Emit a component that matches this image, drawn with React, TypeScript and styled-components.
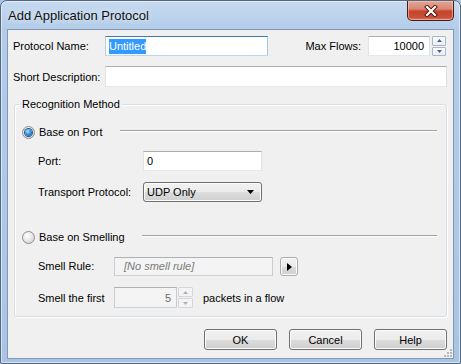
import React from "react";
import styled, { createGlobalStyle, css } from "styled-components";

const GlobalStyle = createGlobalStyle`
  html, body {
    margin: 0;
    padding: 0;
    background: #a9c4e2;
  }
  * {
    box-sizing: border-box;
  }
  body {
    font-family: "Liberation Sans", Arial, sans-serif;
    font-size: 11px;
    color: #000;
  }
`;

const Window = styled.div`
  position: relative;
  width: 461px;
  height: 364px;
  display: flex;
  flex-direction: column;
  padding: 0 6px 4px 6px;
  border: 1px solid #53677f;
  border-radius: 7px 7px 2px 2px;
  background: linear-gradient(
    to bottom,
    #c6daf0 0px,
    #bcd3ec 14px,
    #b3cce8 29px,
    #aec8e6 60%,
    #a9c4e2 100%
  );
  box-shadow: inset 0 0 0 1px rgba(255, 255, 255, 0.55);
`;

const TitleBar = styled.div`
  height: 28px;
  display: flex;
  align-items: flex-start;
  justify-content: space-between;
  padding-left: 1px;
`;

const Title = styled.div`
  font-size: 13px;
  line-height: 16px;
  margin-top: 7px;
  color: #101010;
  text-shadow: 0 0 6px rgba(255, 255, 255, 0.9);
`;

const CloseButton = styled.div`
  width: 47px;
  height: 20px;
  display: flex;
  align-items: center;
  justify-content: center;
  border: 1px solid #4a1b14;
  border-top: none;
  border-radius: 0 0 5px 5px;
  background: linear-gradient(
    to bottom,
    #e6a394 0%,
    #d98a78 40%,
    #c7442b 55%,
    #c94f36 85%,
    #d9765e 100%
  );
  box-shadow: inset 0 0 0 1px rgba(255, 210, 200, 0.55);
`;

const Client = styled.div`
  position: relative;
  flex: 1;
  display: flex;
  flex-direction: column;
  border: 1px solid #8197b3;
  background: #f0f0f0;
  padding: 6px 6px 0 5px;
`;

const Row = styled.div<{ $top?: number; $height?: number }>`
  display: flex;
  align-items: center;
  height: ${(p) => p.$height ?? 20}px;
  margin-top: ${(p) => p.$top ?? 0}px;
`;

const Label = styled.div<{ $width?: number }>`
  flex: none;
  width: ${(p) => (p.$width ? `${p.$width}px` : "auto")};
  white-space: nowrap;
`;

const Spacer = styled.div`
  flex: 1;
`;

const TextBox = styled.div<{
  $width?: number;
  $height?: number;
  $focused?: boolean;
  $disabled?: boolean;
  $right?: boolean;
}>`
  flex: ${(p) => (p.$width ? "none" : "1")};
  width: ${(p) => (p.$width ? `${p.$width}px` : "auto")};
  height: ${(p) => p.$height ?? 20}px;
  display: flex;
  align-items: center;
  justify-content: ${(p) => (p.$right ? "flex-end" : "flex-start")};
  padding: 0 5px 0 3px;
  background: #fff;
  border: 1px solid;
  border-color: #abadb3 #dbdfe6 #e3e9ef #e2e3ea;
  white-space: nowrap;
  ${(p) =>
    p.$focused &&
    css`
      border-color: #3d7bad #a4c9e3 #b7d9ed #b5cfe7;
    `}
  ${(p) =>
    p.$disabled &&
    css`
      background: #f4f4f4;
      border-color: #adb2b5 #c9cdd1 #d0d3d6 #c9cdd1;
      color: #6d6d6d;
    `}
`;

const Selected = styled.span`
  background: #3399ff;
  color: #fff;
  padding: 1px 0 2px;
`;

const Placeholder = styled.span`
  font-style: italic;
  color: #7a7a7a;
  padding-left: 6px;
`;

const SpinBox = styled.div<{ $width: number; $height: number; $gap?: number }>`
  flex: none;
  display: flex;
  flex-direction: column;
  gap: 1px;
  width: ${(p) => p.$width}px;
  height: ${(p) => p.$height}px;
  margin-left: ${(p) => p.$gap ?? 1}px;
`;

const SpinHalf = styled.div<{ $disabled?: boolean }>`
  flex: 1;
  display: flex;
  align-items: center;
  justify-content: center;
  border: 1px solid ${(p) => (p.$disabled ? "#d4d6d9" : "#a9b6c8")};
  border-radius: 1px;
  background: ${(p) =>
    p.$disabled
      ? "#f4f4f4"
      : "linear-gradient(to bottom, #fbfcfd 0%, #e8edf3 100%)"};
`;

const Fieldset = styled.div`
  position: relative;
  margin: 17px 0 0 1px;
  border: 1px solid #d5dfe5;
  border-radius: 3px;
  box-shadow: inset 1px 1px 0 #fff, 1px 1px 0 #fff;
  padding: 17px 9px 8px 7px;
`;

const Legend = styled.div`
  position: absolute;
  top: -8px;
  left: 5px;
  padding: 0 2px;
  line-height: 14px;
  background: #f0f0f0;
`;

const RadioRow = styled.div<{ $top?: number }>`
  display: flex;
  align-items: center;
  height: 20px;
  margin-top: ${(p) => p.$top ?? 0}px;
`;

const RadioCircle = styled.div<{ $checked?: boolean }>`
  flex: none;
  width: 13px;
  height: 13px;
  border-radius: 50%;
  border: 1px solid #8f8f8f;
  background: radial-gradient(circle at 40% 35%, #ffffff 0%, #e9e9e9 45%, #c9c9c9 100%);
  display: flex;
  align-items: center;
  justify-content: center;
  &::after {
    content: "";
    display: ${(p) => (p.$checked ? "block" : "none")};
    width: 7px;
    height: 7px;
    border-radius: 50%;
    background: radial-gradient(circle at 40% 35%, #b6e4ff 0%, #3b93dc 45%, #0b4f98 100%);
    box-shadow: 0 0 0 1px #1f5a8d;
  }
`;

const RadioText = styled.div`
  margin-left: 4px;
  white-space: nowrap;
`;

const Etched = styled.div`
  flex: 1;
  margin-left: 17px;
  height: 2px;
  margin-top: -2px;
  border-top: 1px solid #a0a0a0;
  border-bottom: 1px solid #ffffff;
`;

const Indented = styled(Row)`
  margin-left: 16px;
`;

const ButtonBase = css`
  border: 1px solid #707070;
  border-radius: 3px;
  background: linear-gradient(
    to bottom,
    #f2f2f2 0%,
    #ebebeb 50%,
    #dddddd 50%,
    #cfcfcf 100%
  );
  box-shadow: inset 0 0 0 1px #fcfcfc;
`;

const Combo = styled.div<{ $width: number }>`
  ${ButtonBase};
  width: ${(p) => p.$width}px;
  height: 20px;
  display: flex;
  align-items: center;
  justify-content: space-between;
  padding: 0 7px 0 3px;
`;

const ArrowButton = styled.div`
  ${ButtonBase};
  border-color: #acacac;
  width: 18px;
  height: 19px;
  margin: 1px 0 0 7px;
  display: flex;
  align-items: center;
  justify-content: center;
`;

const ButtonBar = styled.div`
  display: flex;
  justify-content: flex-end;
  gap: 12px;
  margin-top: 12px;
`;

const PushButton = styled.div`
  ${ButtonBase};
  width: 73px;
  height: 21px;
  display: flex;
  align-items: center;
  justify-content: center;
`;

const Trailing = styled.div`
  margin-left: 10px;
  white-space: nowrap;
`;

const Grip = styled.svg`
  position: absolute;
  right: 1px;
  bottom: 1px;
`;

const Tri = ({ dir, color = "#000", w = 7, h = 4 }: { dir: "up" | "down" | "right"; color?: string; w?: number; h?: number }) => {
  if (dir === "right") {
    return (
      <svg width={h} height={w} viewBox={`0 0 ${h} ${w}`}>
        <polygon points={`0,0 ${h},${w / 2} 0,${w}`} fill={color} />
      </svg>
    );
  }
  const pts = dir === "up" ? `0,${h} ${w / 2},0 ${w},${h}` : `0,0 ${w},0 ${w / 2},${h}`;
  return (
    <svg width={w} height={h} viewBox={`0 0 ${w} ${h}`}>
      <polygon points={pts} fill={color} />
    </svg>
  );
};

const Spinner = ({ width, height, disabled, gap }: { width: number; height: number; disabled?: boolean; gap?: number }) => {
  const c = disabled ? "#b0b0b0" : "#4d6185";
  return (
    <SpinBox $width={width} $height={height} $gap={gap}>
      <SpinHalf $disabled={disabled}>
        <Tri dir="up" color={c} w={5} h={3} />
      </SpinHalf>
      <SpinHalf $disabled={disabled}>
        <Tri dir="down" color={c} w={5} h={3} />
      </SpinHalf>
    </SpinBox>
  );
};

const App = () => {
  return (
    <>
      <GlobalStyle />
      <Window>
        <TitleBar>
          <Title>Add Application Protocol</Title>
          <CloseButton>
            <svg width="14" height="12" viewBox="0 0 14 12">
              <path d="M3 2 L11 10 M11 2 L3 10" stroke="#4b1209" strokeWidth="4" strokeLinecap="square" />
              <path d="M3 2 L11 10 M11 2 L3 10" stroke="#ffffff" strokeWidth="2.2" strokeLinecap="square" />
            </svg>
          </CloseButton>
        </TitleBar>
        <Client>
          <Row>
            <Label $width={92}>Protocol Name:</Label>
            <TextBox $width={163} $focused>
              <Selected>Untitled</Selected>
            </TextBox>
            <Spacer />
            <Label>Max Flows:</Label>
            <TextBox $width={62} $right style={{ marginLeft: 7 }}>
              10000
            </TextBox>
            <Spinner width={14} height={20} gap={2} />
            <Spacer style={{ flex: "none", width: 1 }} />
          </Row>
          <Row $top={10} $height={21}>
            <Label $width={92}>Short Description:</Label>
            <TextBox $height={21} />
          </Row>

          <Fieldset>
            <Legend>Recognition Method</Legend>
            <RadioRow>
              <RadioCircle $checked />
              <RadioText>Base on Port</RadioText>
              <Etched />
            </RadioRow>
            <Indented $top={9}>
              <Label $width={105}>Port:</Label>
              <TextBox $width={119}>0</TextBox>
            </Indented>
            <Indented $top={11}>
              <Label $width={105}>Transport Protocol:</Label>
              <Combo $width={119}>
                <span>UDP Only</span>
                <Tri dir="down" w={7} h={4} />
              </Combo>
            </Indented>

            <RadioRow $top={25}>
              <RadioCircle />
              <RadioText>Base on Smelling</RadioText>
              <Etched />
            </RadioRow>
            <Indented $top={9}>
              <Label $width={76}>Smell Rule:</Label>
              <TextBox $width={159} $height={19} $disabled>
                <Placeholder>[No smell rule]</Placeholder>
              </TextBox>
              <ArrowButton>
                <Tri dir="right" w={8} h={5} />
              </ArrowButton>
            </Indented>
            <Indented $top={11} $height={21}>
              <Label $width={76}>Smell the first</Label>
              <TextBox $width={63} $height={21} $disabled $right>
                5
              </TextBox>
              <Spinner width={15} height={21} disabled />
              <Trailing>packets in a flow</Trailing>
            </Indented>
          </Fieldset>

          <ButtonBar>
            <PushButton>OK</PushButton>
            <PushButton>Cancel</PushButton>
            <PushButton>Help</PushButton>
          </ButtonBar>

          <Grip width="8" height="8" viewBox="0 0 8 8">
            {[
              [6, 0],
              [6, 3],
              [3, 3],
              [6, 6],
              [3, 6],
              [0, 6],
            ].map(([x, y]) => (
              <rect key={`${x}-${y}`} x={x} y={y} width="2" height="2" fill="#b8b8b8" />
            ))}
          </Grip>
        </Client>
      </Window>
    </>
  );
};

export default App;
